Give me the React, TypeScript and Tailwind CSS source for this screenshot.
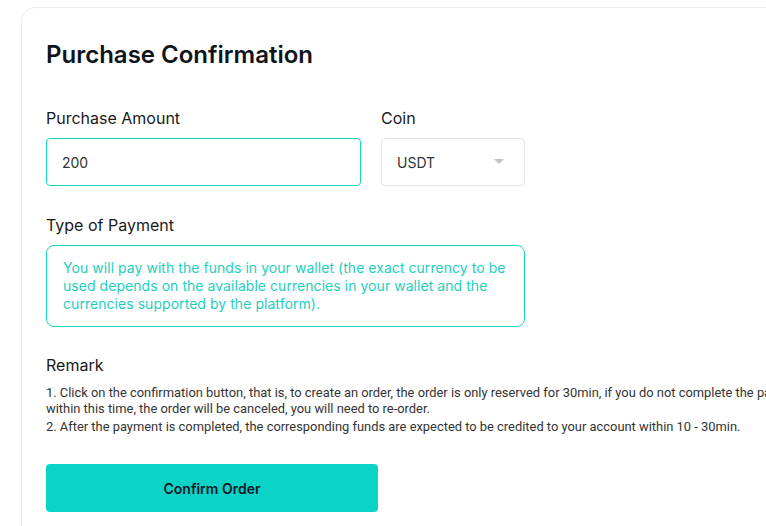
import React from "react";

export default function App() {
  return (
    <div className="w-[766px] h-[526px] overflow-hidden bg-white" style={{ fontFamily: "Inter, 'Noto Sans', sans-serif" }}>
      <div className="ml-[21px] mt-[7px] w-[860px] h-[600px] rounded-[14px] border border-[#ececec] bg-white pl-[24px] pt-[32px]">
        <h1 className="text-[24px] leading-[30px] font-semibold text-[#0f1419]">Purchase Confirmation</h1>

        <div className="mt-[38px] flex gap-[20px]">
          <div className="flex flex-col">
            <label className="text-[16px] leading-[20px] text-[#1a1a1a]">Purchase Amount</label>
            <div className="mt-[10px] w-[315px] h-[48px] rounded-[4px] border border-[#14d6c3] flex items-center px-[15px] text-[14px] text-[#333]">200</div>
          </div>
          <div className="flex flex-col">
            <label className="text-[16px] leading-[20px] text-[#1a1a1a]">Coin</label>
            <div className="mt-[10px] w-[144px] h-[48px] rounded-[4px] border border-[#e4e6ea] flex items-center justify-between pl-[15px] pr-[20px] text-[14px] text-[#333]">
              <span>USDT</span>
              <svg width="10" height="6" viewBox="0 0 10 6"><path d="M0 0 L10 0 L5 5 Z" fill="#c0c4cc" /></svg>
            </div>
          </div>
        </div>

        <div className="mt-[29px] text-[16px] leading-[20px] text-[#1a1a1a]">Type of Payment</div>
        <div className="mt-[10px] w-[479px] rounded-[8px] border border-[#14d6c3] px-[16px] pt-[13px] pb-[13px] text-[14px] leading-[18px] tracking-[0.05px] text-[#1ecfbe]">
          You will pay with the funds in your wallet (the exact currency to be used depends on the available currencies in your wallet and the currencies supported by the platform).
        </div>

        <div className="mt-[28px] text-[16px] leading-[20px] text-[#1a1a1a]">Remark</div>
        <div className="mt-[10px] w-[780px] text-[12.9px] leading-[16px] text-[#333]" style={{ fontFamily: "Roboto, 'Liberation Sans', sans-serif" }}>
          <p>1. Click on the confirmation button, that is, to create an order, the order is only reserved for 30min, if you do not complete the payment within this time, the order will be canceled, you will need to re-order.</p>
          <p className="mt-[2px]">2. After the payment is completed, the corresponding funds are expected to be credited to your account within 10 - 30min.</p>
        </div>

        <button className="mt-[29px] w-[332px] h-[48px] rounded-[4px] bg-[#0bd3c5] text-[14px] font-semibold text-[#10172a]">Confirm Order</button>
      </div>
    </div>
  );
}
